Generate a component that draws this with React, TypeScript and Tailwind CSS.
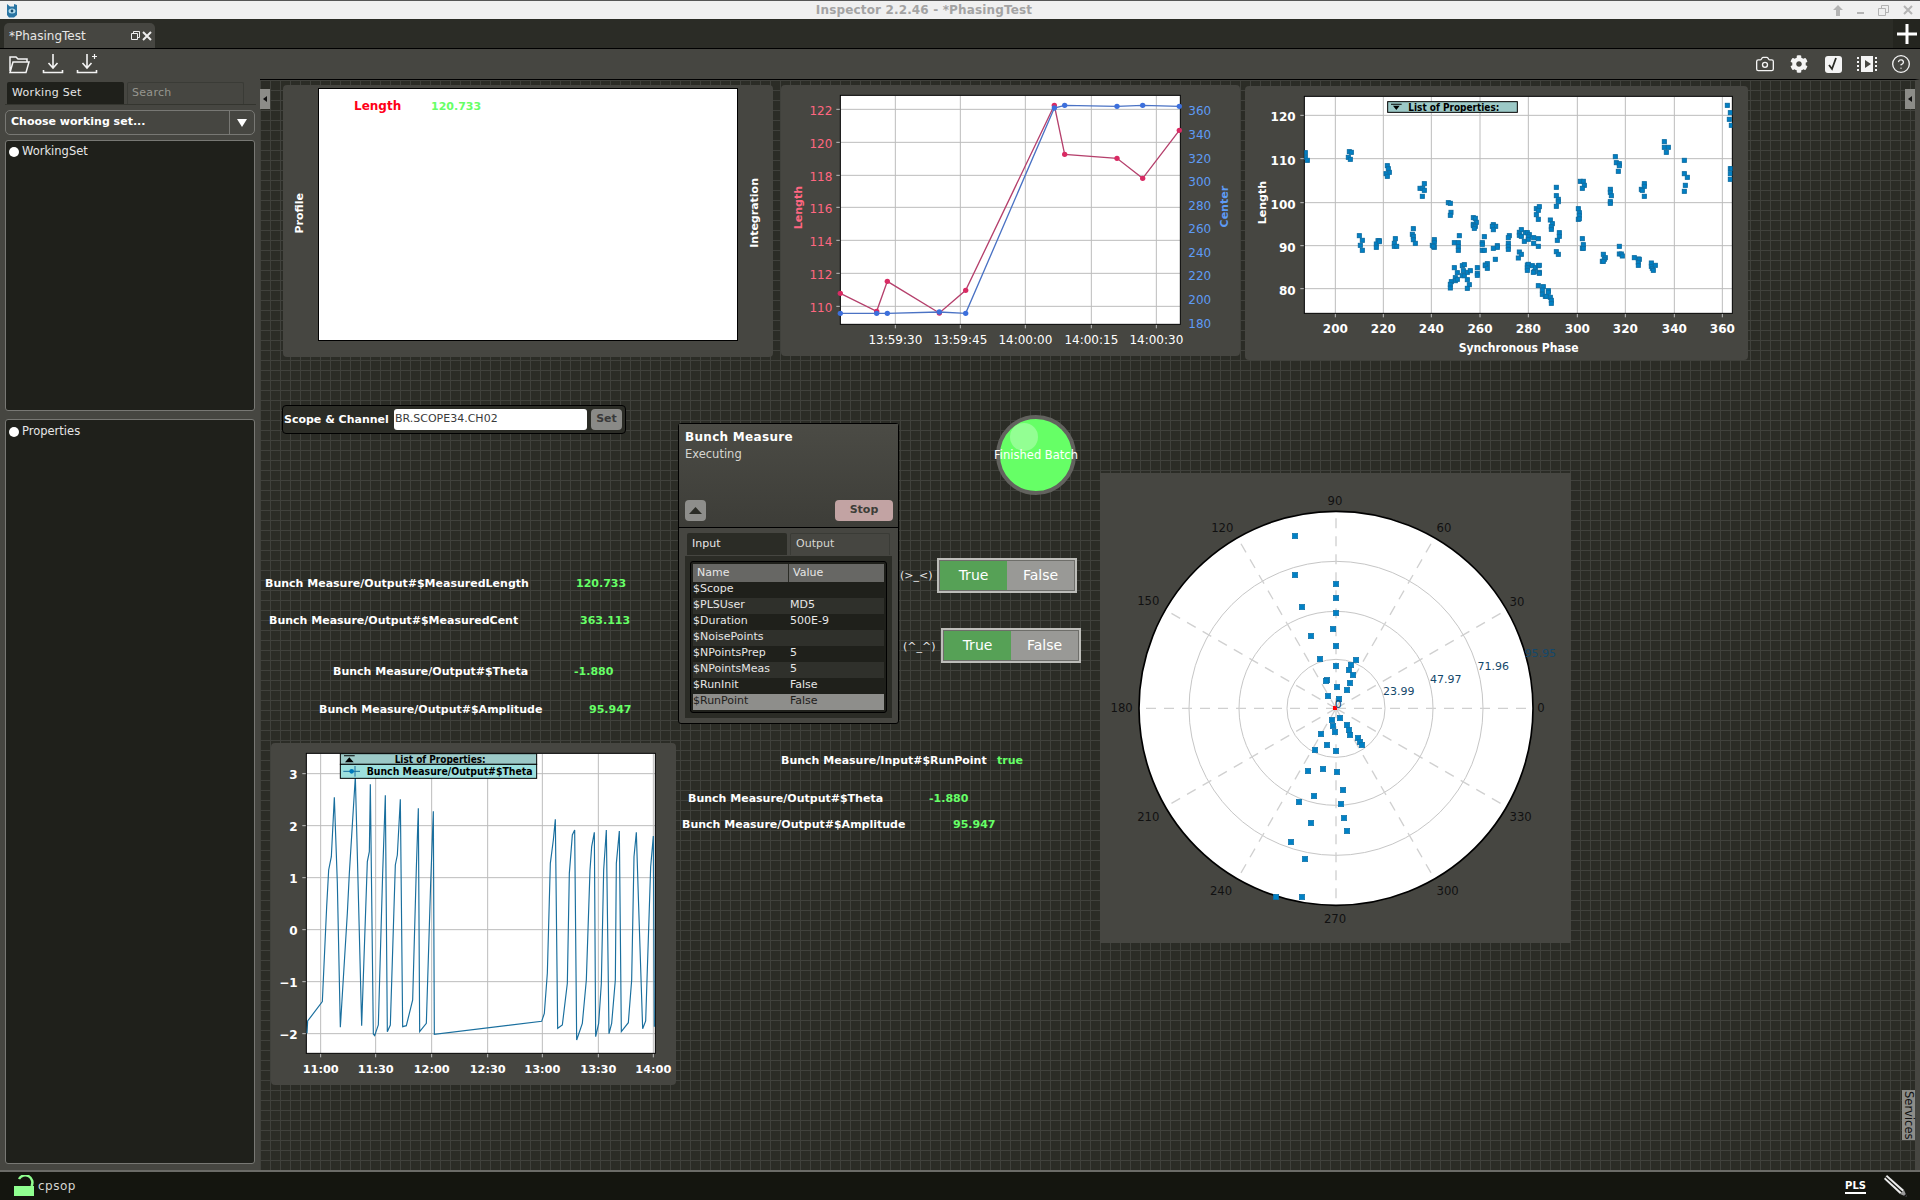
import { Camera, CircleHelp } from "lucide-react";
import { FaCog } from "react-icons/fa";

const lengthPts = [[211,640],[320,694],[352,604],[508,699],[587,631],[853,76],[884,223],[1041,235],[1118,295],[1228,151]];
const centerPts = [[211,700],[320,700],[352,700],[508,696],[587,700],[853,84],[884,76],[1041,79],[1118,76],[1228,79]];

const scatter = [
  [196,218],[196,232],[202,241],[328,215],[334,217],[325,232],[331,238],[442,257],[445,266],[448,277],[438,281],[442,289],
  [553,311],[540,325],[548,325],[553,331],[547,349],[625,368],[631,370],[633,397],[631,406],[358,467],[367,481],[361,496],[367,511],
  [414,482],[418,482],[409,492],[409,502],[418,485],[466,476],[463,490],[463,499],[470,499],[520,446],[517,463],[520,469],[520,479],[526,490],
  [583,479],[583,487],[577,496],[583,502],[580,499],[658,467],[643,488],[655,488],[655,499],[655,511],
  [700,413],[706,415],[709,427],[700,433],[700,437],[706,439],[703,445],[733,470],[727,488],[727,493],[727,511],[733,511],
  [760,434],[767,439],[757,439],[760,449],[772,497],[772,502],[760,505],[766,538],[808,467],[805,473],[805,490],[805,499],[805,508],
  [838,457],[844,449],[838,466],[844,469],[856,458],[862,458],[868,464],[865,470],[853,484],[865,478],[881,473],[895,476],[881,490],[895,499],
  [838,516],[844,523],[835,534],[889,386],[898,380],[889,404],[895,391],[895,418],[931,420],[937,431],[934,440],[934,448],
  [949,322],[949,347],[955,358],[955,365],[949,379],[958,458],[958,469],[952,481],[949,515],[955,523],
  [1015,386],[1018,398],[1018,406],[1015,418],[1018,416],[1021,304],[1030,304],[1033,316],[1027,325],[1027,476],[1030,494],[1027,505],[1030,505],
  [1111,328],[1111,337],[1114,347],[1111,365],[1111,370],[1126,230],[1129,248],[1138,251],[1138,257],[1135,274],[1138,499],[1138,522],[1144,522],[1147,528],
  [1090,523],[1096,533],[1093,538],[1087,544],[1090,544],[1183,533],[1195,537],[1198,538],[1195,547],[1195,556],[1234,549],[1234,559],[1237,565],[1240,571],[1246,556],
  [1213,311],[1213,319],[1204,328],[1207,331],[1213,349],[1273,185],[1273,202],[1285,202],[1279,217],[1333,241],[1333,281],[1342,292],[1336,316],[1333,334],
  [1462,76],[1471,98],[1468,118],[1474,136],[1471,266],[1474,266],[1471,281],[1471,298],
  [643,563],[652,578],[646,593],[646,602],[652,598],[634,605],[631,613],[631,624],[667,557],[673,554],[670,572],[667,587],[673,587],[682,577],[691,572],[682,599],[688,614],[682,625],
  [712,563],[712,580],[712,586],[736,555],[742,551],[736,557],[742,565],[862,555],[865,553],[862,563],[862,571],[877,557],[886,563],[895,557],[883,575],[880,577],[898,577],[898,580],[898,556],
  [895,617],[910,620],[907,630],[907,643],[916,649],[925,632],[925,637],[919,649],[931,652],[934,661],[934,670],
];

const theta = [[141,880],[143,843],[187,785],[200,500],[206,390],[214,350],[223,172],[232,430],[241,862],[262,520],[268,400],[286,110],[296,500],[305,857],[322,365],[328,335],[331,133],[340,882],[344,887],[355,855],[368,400],[376,166],[382,875],[391,855],[406,375],[412,345],[421,178],[428,860],[439,857],[458,780],[469,385],[475,205],[479,875],[499,850],[512,430],[520,214],[523,883],[845,844],[853,820],[862,700],[871,370],[880,300],[886,238],[893,865],[907,855],[922,730],[928,400],[937,285],[944,270],[950,900],[967,850],[979,720],[990,390],[995,320],[1003,277],[1007,890],[1016,850],[1024,730],[1031,390],[1039,270],[1047,881],[1055,850],[1066,720],[1069,370],[1078,273],[1084,875],[1105,848],[1115,720],[1122,350],[1129,277],[1136,500],[1148,866],[1157,843],[1172,380],[1180,288],[1183,860]];

const polar = [
  [585,183],[585,300],[708,327],[708,369],[606,396],[708,414],[699,462],[633,483],[708,513],[660,552],[768,555],[753,570],[708,573],[747,585],[759,600],[681,615],[678,618],[750,624],[711,636],[741,645],[684,663],[717,672],
  [720,729],[696,735],[699,753],[741,750],[747,765],[705,771],[663,777],[750,780],[774,789],[780,801],[786,810],[681,810],[645,825],[708,828],[624,888],[669,882],[711,891],[729,945],[642,963],[597,981],[723,987],[732,1029],[633,1044],[741,1068],[573,1101],[615,1152],[528,1266],[606,1266],
];

const tableRows = [
  ["$Scope", ""],
  ["$PLSUser", "MD5"],
  ["$Duration", "500E-9"],
  ["$NoisePoints", ""],
  ["$NPointsPrep", "5"],
  ["$NPointsMeas", "5"],
  ["$RunInit", "False"],
  ["$RunPoint", "False"],
];

const toPoints = (pts: number[][]) => pts.map((p) => p.join(",")).join(" ");

function Panel({ className, children }: { className: string; children: React.ReactNode }) {
  return <div className={`absolute rounded-[4px] bg-[#464641] ${className}`}>{children}</div>;
}

function DownloadIcon({ plus }: { plus?: boolean }) {
  return (
    <svg width="22" height="22" viewBox="0 0 22 22" fill="none" stroke="#f4f4f4" strokeWidth="1.6">
      <path d="M11 1v13M6.5 10l4.5 5 4.5-5M1.5 17v2.5h19V17" />
      {plus && <path d="M16 3.5h5M18.5 1v5" strokeWidth="1.2" />}
    </svg>
  );
}

function Toggle({ className }: { className: string }) {
  return (
    <div className={`absolute flex h-[35px] w-[140px] border-2 border-[#bdbdb9] bg-[#6e6e6a] p-px text-[14px] ${className}`}>
      <div className="flex flex-1 items-center justify-center bg-[#56a156] text-white">True</div>
      <div className="flex flex-1 items-center justify-center bg-[#999996] text-white">False</div>
    </div>
  );
}

function Label({ className, green, children }: { className: string; green?: boolean; children: React.ReactNode }) {
  return (
    <div className={`absolute h-4 whitespace-nowrap text-[11px] font-bold leading-4 ${green ? "text-[#66ff66]" : "text-white"} ${className}`}>
      {children}
    </div>
  );
}

export default function App() {
  return (
    <div className="flex h-screen w-[1920px] flex-col overflow-hidden bg-[#464641] font-['DejaVu_Sans',sans-serif] text-[11px] text-white">
      {/* window title */}
      <div className="relative flex h-[19px] shrink-0 items-center justify-center border-t border-[#555] bg-[#f0f0f0] pr-[72px] text-[12px] font-bold tracking-[0.15px] text-[#a3a3a3]">
        <svg className="absolute left-[6px] top-[2px]" width="12" height="15" viewBox="0 0 12 15">
          <path d="M1 1l3 2.5h4V1l3 1v10l-3 2.5H3L1 12z" fill="#2a75a3" />
          <ellipse cx="6" cy="8" rx="3.5" ry="2.5" fill="#b5dcec" />
          <circle cx="6" cy="8" r="1.4" fill="#164b6e" />
        </svg>
        Inspector 2.2.46 - *PhasingTest
        <div className="absolute right-[7px] top-0 flex h-[18px] items-center gap-[14px] text-[#b4b4b4]">
          <svg width="10" height="11" viewBox="0 0 10 11" fill="#b4b4b4"><path d="M5 0l5 5H7v6H3V5H0z" /></svg>
          <div className="mt-[6px] h-[2px] w-[7px] bg-[#b4b4b4]" />
          <svg width="11" height="11" viewBox="0 0 11 11" fill="none" stroke="#b4b4b4"><path d="M.5 3.5h7v7h-7zM3.5 3V.5h7v7H8" /></svg>
          <svg width="10" height="10" viewBox="0 0 10 10" stroke="#b4b4b4" strokeWidth="2"><path d="M1 1l8 8M9 1l-8 8" /></svg>
        </div>
      </div>

      {/* tab bar */}
      <div className="flex h-[30px] shrink-0 items-end justify-between border-b border-black bg-[#2b2c26]">
        <div className="ml-[4px] flex h-[25px] w-[151px] items-center justify-between rounded-t-[5px] bg-[#464641] pl-[5px] pr-[3px] text-[12px] text-[#e6e6e6]">
          <span>*PhasingTest</span>
          <span className="flex items-center gap-[2px]">
            <svg width="9" height="9" viewBox="0 0 9 9" fill="none" stroke="#eee"><path d="M.5 2.5h6v6h-6zM2.5 2V.5h6v6H7" /></svg>
            <svg width="10" height="10" viewBox="0 0 10 10" stroke="#eee" strokeWidth="2"><path d="M1 1l8 8M9 1l-8 8" /></svg>
          </span>
        </div>
        <div className="flex h-[29px] w-[27px] items-center justify-center bg-[#24251f]">
          <svg width="20" height="20" viewBox="0 0 20 20" fill="#fff"><path d="M8.5 0h3v8.5H20v3h-8.5V20h-3v-8.5H0v-3h8.5z" /></svg>
        </div>
      </div>

      {/* toolbar */}
      <div className="flex h-[30px] shrink-0 items-center justify-between pl-[8px] pr-[8px]">
        <div className="flex items-center gap-[12px]">
          <svg width="22" height="20" viewBox="0 0 22 20" fill="none" stroke="#f4f4f4" strokeWidth="1.5">
            <path d="M2 17V3h6l2 2h9v3M2 18.5h16L21 8H5z" />
          </svg>
          <DownloadIcon />
          <DownloadIcon plus />
        </div>
        <div className="flex items-center gap-[12px]">
          <div className="flex w-[22px] justify-center"><Camera size={20} strokeWidth={1.6} color="#f4f4f4" /></div>
          <div className="flex w-[22px] justify-center"><FaCog size={18} color="#f4f4f4" /></div>
          <div className="flex w-[22px] justify-center">
            <div className="flex h-[17px] w-[17px] items-center justify-center rounded-[3px] bg-[#f4f4f4]">
              <svg width="12" height="14" viewBox="0 0 12 14" fill="none" stroke="#2b2c26" strokeWidth="1.8"><path d="M2 8l3 4 4-11" /></svg>
            </div>
          </div>
          <svg width="22" height="18" viewBox="0 0 22 18" fill="#f4f4f4">
            <path d="M5 1h12v16H5z" />
            <path d="M9 5l6 4-6 4z" fill="#464641" />
            <path d="M1 2h2v2H1zM1 6h2v2H1zM1 10h2v2H1zM1 14h2v2H1zM19 2h2v2h-2zM19 6h2v2h-2zM19 10h2v2h-2zM19 14h2v2h-2z" />
          </svg>
          <div className="flex w-[22px] justify-center"><CircleHelp size={20} strokeWidth={1.6} color="#f4f4f4" /></div>
        </div>
      </div>

      <div className="flex min-h-0 flex-1">
        {/* sidebar */}
        <div className="flex w-[260px] shrink-0 flex-col px-[5px] pb-[6px] pt-[3px]">
          <div className="ml-[2px] flex h-[22px] gap-[3px]">
            <div className="flex w-[117px] items-center rounded-t-[2px] bg-[#1f201b] px-[5px] tracking-[0.3px] text-[#e6e6e6]">Working Set</div>
            <div className="flex w-[117px] items-center rounded-t-[2px] border border-b-0 border-[#3a3b36] px-[4px] tracking-[0.3px] text-[#96968f]">Search</div>
          </div>
          <div className="h-px w-[251px] bg-[#34352f]" />
          <div className="mt-[5px] flex h-[25px] items-center justify-between rounded-[5px] border border-[#787874]">
            <span className="pl-[5px] font-bold">Choose working set...</span>
            <span className="flex h-full w-[25px] items-center justify-center border-l border-[#787874]">
              <svg width="10" height="8" viewBox="0 0 10 8" fill="#fff"><path d="M0 0h10L5 8z" /></svg>
            </span>
          </div>
          <div className="mt-[5px] h-[271px] rounded-[3px] border border-[#787874] bg-[#1f201b] px-[3px] pt-[2px]">
            <div className="flex items-center gap-[3px] text-[11.5px] text-[#e6e6e6]">
              <span className="h-[10px] w-[10px] rounded-full bg-white" />
              WorkingSet
            </div>
          </div>
          <div className="mt-[8px] min-h-0 flex-1 rounded-[3px] border border-[#787874] bg-[#1f201b] px-[3px] pt-[3px]">
            <div className="flex items-center gap-[3px] text-[11.5px] text-[#e6e6e6]">
              <span className="h-[10px] w-[10px] rounded-full bg-white" />
              Properties
            </div>
          </div>
        </div>

        {/* canvas */}
        <div className="relative flex-1 border-r-[5px] border-t border-r-[#464641] border-t-black bg-[#2b2c26] bg-[linear-gradient(#40413c_1px,transparent_1px),linear-gradient(90deg,#40413c_1px,transparent_1px)] bg-[size:10px_10px]">
          <div className="absolute left-0 top-[9px] flex h-[20px] w-[10px] items-center justify-center bg-[#8c8c88]">
            <svg width="4" height="6" viewBox="0 0 4 6" fill="#111"><path d="M4 0v6L0 3z" /></svg>
          </div>
          <div className="absolute right-0 top-[9px] flex h-[20px] w-[10px] items-center justify-center bg-[#8c8c88]">
            <svg width="4" height="6" viewBox="0 0 4 6" fill="#111"><path d="M4 0v6L0 3z" /></svg>
          </div>

          {/* profile plot */}
          <Panel className="left-[23px] top-[5px] flex h-[272px] w-[490px] items-start">
            <div className="flex h-[256px] w-[35px] items-center justify-center">
              <span className="rotate-180 font-bold [writing-mode:vertical-rl]">Profile</span>
            </div>
            <div className="mt-[3px] flex h-[253px] w-[420px] items-baseline border border-black bg-white pl-[35px] pt-[8px] font-bold">
              <span className="w-[77px] text-[12px] text-[#ff0018]">Length</span>
              <span className="text-[#66ff66]">120.733</span>
            </div>
            <div className="flex h-[256px] w-[35px] items-center justify-center">
              <span className="rotate-180 font-bold [writing-mode:vertical-rl]">Integration</span>
            </div>
          </Panel>

          {/* integration plot */}
          <Panel className="left-[521px] top-[5px] h-[271px] w-[459px]">
            <svg width="459" height="271" viewBox="33 15 1377 813" fontFamily="DejaVu Sans">
              <rect x="211" y="46" width="1020" height="687" fill="#fff" />
              {[376, 571, 766, 964, 1159].map((x) => (
                <line key={x} x1={x} x2={x} y1="46" y2="745" stroke="#bcbcbc" strokeWidth="3" />
              ))}
              {[88, 187, 286, 382, 481, 580, 679].map((y) => (
                <line key={y} x1="199" x2="1231" y1={y} y2={y} stroke="#bcbcbc" strokeWidth="3" />
              ))}
              <rect x="211" y="46" width="1020" height="687" fill="none" stroke="#000" strokeWidth="3" />
              <polyline points={toPoints(lengthPts)} fill="none" stroke="#b5406c" strokeWidth="4" />
              <polyline points={toPoints(centerPts)} fill="none" stroke="#4a72c4" strokeWidth="4" />
              {lengthPts.map(([x, y]) => <circle key={x} cx={x} cy={y} r="8" fill="#d92a63" />)}
              {centerPts.map(([x, y]) => <circle key={x} cx={x} cy={y} r="8" fill="#3c6fdc" />)}
              {[["122", 106], ["120", 205], ["118", 304], ["116", 400], ["114", 499], ["112", 598], ["110", 697]].map(([t, y]) => (
                <text key={t} x="187" y={y} textAnchor="end" fontSize="36" fill="#ff6680">{t}</text>
              ))}
              {[["360", 106], ["340", 178], ["320", 250], ["300", 319], ["280", 391], ["260", 460], ["240", 532], ["220", 601], ["200", 673], ["180", 745]].map(([t, y]) => (
                <text key={t} x="1255" y={y} fontSize="36" fill="#5e9bf5">{t}</text>
              ))}
              {[["13:59:30", 376], ["13:59:45", 571], ["14:00:00", 766], ["14:00:15", 964], ["14:00:30", 1159]].map(([t, x]) => (
                <text key={t} x={x} y="791" textAnchor="middle" fontSize="36" fill="#fff">{t}</text>
              ))}
              <text transform="translate(96 383) rotate(-90)" textAnchor="middle" fontSize="33" fontWeight="bold" fill="#ff6680">Length</text>
              <text transform="translate(1373 380) rotate(-90)" textAnchor="middle" fontSize="33" fontWeight="bold" fill="#5e9bf5">Center</text>
            </svg>
          </Panel>

          {/* synchronous phase scatter */}
          <Panel className="left-[985px] top-[6px] h-[274px] w-[503px]">
            <svg width="503" height="274" viewBox="15 18 1509 822" fontFamily="DejaVu Sans">
              <rect x="193" y="49" width="1284" height="651" fill="#fff" />
              {[286, 430, 574, 720, 865, 1012, 1156, 1303, 1447].map((x) => (
                <line key={x} x1={x} x2={x} y1="49" y2="712" stroke="#bcbcbc" strokeWidth="3" />
              ))}
              {[106, 236, 368, 497, 626].map((y) => (
                <line key={y} x1="181" x2="1477" y1={y} y2={y} stroke="#bcbcbc" strokeWidth="3" />
              ))}
              <rect x="193" y="49" width="1284" height="651" fill="none" stroke="#000" strokeWidth="3" />
              <svg x="193" y="49" width="1284" height="651" viewBox="193 49 1284 651">
                {scatter.map(([x, y], i) => (
                  <rect key={i} x={x - 6} y={y - 6} width="12" height="12" fill="#0081c6" stroke="#0f6fa5" strokeWidth="3" />
                ))}
              </svg>
              <rect x="443" y="65" width="389" height="32" fill="#9cc9c7" stroke="#000" strokeWidth="3" />
              <path d="M453 71h32v3h-32zM459 77h20l-10 13z" fill="#000" />
              <text x="505" y="93" fontSize="30" fontWeight="bold" textLength="273" lengthAdjust="spacingAndGlyphs" fill="#000">List of Properties:</text>
              {[120, 110, 100, 90, 80].map((t, i) => (
                <text key={t} x="167" y={[124, 254, 386, 515, 644][i]} textAnchor="end" fontSize="36" fontWeight="bold" fill="#fff">{t}</text>
              ))}
              {[200, 220, 240, 260, 280, 300, 320, 340, 360].map((t, i) => (
                <text key={t} x={[286, 430, 574, 720, 865, 1012, 1156, 1303, 1447][i]} y="759" textAnchor="middle" fontSize="36" fontWeight="bold" fill="#fff">{t}</text>
              ))}
              <text x="836" y="816" textAnchor="middle" fontSize="36" fontWeight="bold" textLength="360" lengthAdjust="spacingAndGlyphs" fill="#fff">Synchronous Phase</text>
              <text transform="translate(77 368) rotate(-90)" textAnchor="middle" fontSize="33" fontWeight="bold" fill="#fff">Length</text>
            </svg>
          </Panel>

          {/* scope input */}
          <div className="absolute left-[22px] top-[325px] flex h-[29px] w-[344px] items-center rounded-[4px] border border-black bg-[#2b2c26] pl-[1px] pr-[3px]">
            <span className="mt-px w-[110px] whitespace-nowrap font-bold">Scope &amp; Channel</span>
            <div className="flex h-[21px] w-[193px] items-center rounded-[3px] bg-white pl-px text-[#3a3a3a]">BR.SCOPE34.CH02</div>
            <div className="ml-[4px] flex h-[21px] w-[31px] items-center justify-center rounded-[4px] bg-[#8a8a87] font-bold text-[#3a3a3a]">Set</div>
          </div>

          <Label className="left-[5px] top-[496px]">Bunch Measure/Output#$MeasuredLength</Label>
          <Label green className="left-[316px] top-[496px]">120.733</Label>
          <Label className="left-[9px] top-[533px]">Bunch Measure/Output#$MeasuredCent</Label>
          <Label green className="left-[320px] top-[533px]">363.113</Label>
          <Label className="left-[73px] top-[584px]">Bunch Measure/Output#$Theta</Label>
          <Label green className="left-[314px] top-[584px]">-1.880</Label>
          <Label className="left-[59px] top-[622px]">Bunch Measure/Output#$Amplitude</Label>
          <Label green className="left-[329px] top-[622px]">95.947</Label>
          <Label className="left-[521px] top-[673px]">Bunch Measure/Input#$RunPoint</Label>
          <Label green className="left-[737px] top-[673px]">true</Label>
          <Label className="left-[428px] top-[711px]">Bunch Measure/Output#$Theta</Label>
          <Label green className="left-[669px] top-[711px]">-1.880</Label>
          <Label className="left-[422px] top-[737px]">Bunch Measure/Output#$Amplitude</Label>
          <Label green className="left-[693px] top-[737px]">95.947</Label>

          {/* theta plot */}
          <Panel className="left-[11px] top-[663px] h-[342px] w-[405px]">
            <svg width="405" height="342" viewBox="33 9 1215 1026" fontFamily="DejaVu Sans">
              <rect x="139" y="40" width="1047" height="900" fill="#fff" />
              {[182, 347, 515, 683, 847, 1015, 1180].map((x) => (
                <line key={x} x1={x} x2={x} y1="40" y2="952" stroke="#bcbcbc" strokeWidth="3" />
              ))}
              {[101, 257, 413, 569, 725, 881].map((y) => (
                <line key={y} x1="127" x2="1186" y1={y} y2={y} stroke="#bcbcbc" strokeWidth="3" />
              ))}
              <rect x="139" y="40" width="1047" height="900" fill="none" stroke="#000" strokeWidth="3" />
              <polyline points={toPoints(theta)} fill="none" stroke="#1a6f9e" strokeWidth="3.5" />
              <rect x="241" y="41" width="589" height="32" fill="#9cc9c7" stroke="#000" strokeWidth="3" />
              <rect x="241" y="73" width="589" height="42" fill="#9de0de" stroke="#000" strokeWidth="3" />
              <path d="M252 46h32v3h-32zM268 52l13 15h-26z" fill="#000" />
              <text x="404" y="69" fontSize="30" fontWeight="bold" textLength="273" lengthAdjust="spacingAndGlyphs" fill="#000">List of Properties:</text>
              <path d="M250 94h50M285 78v32" stroke="#1a6f9e" strokeWidth="3" />
              <circle cx="275" cy="94" r="7" fill="#0079bb" />
              <text x="320" y="105" fontSize="30" fontWeight="bold" textLength="498" lengthAdjust="spacingAndGlyphs" fill="#000">Bunch Measure/Output#$Theta</text>
              {[["3", 118], ["2", 274], ["1", 430], ["0", 586], ["−1", 742], ["−2", 898]].map(([t, y]) => (
                <text key={t} x="113" y={y} textAnchor="end" fontSize="36" fontWeight="bold" fill="#fff">{t}</text>
              ))}
              {[["11:00", 182], ["11:30", 347], ["12:00", 515], ["12:30", 683], ["13:00", 847], ["13:30", 1015], ["14:00", 1180]].map(([t, x]) => (
                <text key={t} x={x} y="999" textAnchor="middle" fontSize="34" fontWeight="bold" fill="#fff">{t}</text>
              ))}
            </svg>
          </Panel>

          {/* bunch measure node */}
          <div className="absolute left-[418px] top-[343px] flex h-[301px] w-[221px] flex-col rounded-[3px] border border-black bg-[#464641]">
            <div className="flex h-[104px] shrink-0 flex-col border-b border-black bg-[linear-gradient(#4b4b45,#3d3d38)] pb-[6px] pl-[6px] pr-[5px] pt-[4px]">
              <div className="text-[12px] font-bold tracking-[0.3px]">Bunch Measure</div>
              <div className="text-[11.5px] text-[#d6d6d2]">Executing</div>
              <div className="mt-auto flex items-center justify-between">
                <div className="flex h-[21px] w-[21px] items-center justify-center rounded-[4px] bg-[#8e8e8b]">
                  <svg width="13" height="7" viewBox="0 0 13 7" fill="#2b2c26"><path d="M6.5 0L13 7H0z" /></svg>
                </div>
                <div className="flex h-[21px] w-[58px] items-center justify-center rounded-[4px] bg-[#c2a3a3] font-bold text-[#3d3d38]">Stop</div>
              </div>
            </div>
            <div className="flex flex-1 flex-col px-[6px] pb-[6px] pt-[5px]">
              <div className="flex h-[23px] shrink-0 gap-[3px] pb-px pl-[2px] pr-[2px]">
                <div className="flex w-[100px] items-center rounded-t-[2px] bg-[#2b2c26] pl-[5px] text-[#e6e6e6]">Input</div>
                <div className="flex w-[100px] items-center rounded-t-[2px] border border-b-0 border-[#3a3b36] pl-[5px] text-[#d6d6d2]">Output</div>
              </div>
              <div className="flex-1 bg-[#2b2c26] p-[5px]">
                <div className="h-full rounded-[3px] border border-black bg-[#1f201b] p-[2px]">
                  <div className="flex h-[18px] bg-[#676764] text-[#e6e6e6]">
                    <span className="flex w-[96px] items-center border-r border-[#2b2c26] pl-[4px]">Name</span>
                    <span className="flex flex-1 items-center pl-[4px]">Value</span>
                  </div>
                  {tableRows.map(([name, value], i) => (
                    <div
                      key={name}
                      className={`flex h-[16px] items-center pb-px ${i === 7 ? "bg-[#8e8e8b] text-[#1f201b]" : i % 2 === 1 ? "bg-[#2f302b] text-[#e6e6e6]" : "text-[#e6e6e6]"}`}
                    >
                      <span className="w-[96px] truncate">{name}</span>
                      <span className="flex-1 pl-px">{value}</span>
                    </div>
                  ))}
                </div>
              </div>
            </div>
          </div>

          <div className="absolute left-[640px] top-[488px] text-[#e6e6e6]">(&gt;_&lt;)</div>
          <Toggle className="left-[677px] top-[478px]" />
          <div className="absolute left-[643px] top-[559px] text-[#e6e6e6]">(^_^)</div>
          <Toggle className="left-[681px] top-[548px]" />

          {/* finished batch indicator */}
          <div className="absolute left-[736px] top-[335px] flex h-[80px] w-[80px] items-center justify-center rounded-full border-[4px] border-[#62625e] bg-[#66ff66]">
            <div className="absolute left-[10px] top-[4px] h-[28px] w-[28px] rounded-full bg-[#93ff93]" />
            <span className="relative mt-[2px] whitespace-nowrap text-[11.5px] text-white">Finished Batch</span>
          </div>

          {/* polar plot */}
          <Panel className="left-[840px] top-[393px] h-[470px] w-[471px] rounded-none">
            <svg width="471" height="470" viewBox="0 -6 1413 1410" fontFamily="DejaVu Sans">
              <circle cx="708" cy="700" r="591" fill="#fff" stroke="#000" strokeWidth="5" />
              {[147, 291, 441].map((r) => (
                <circle key={r} cx="708" cy="700" r={r} fill="none" stroke="#c6c6c6" strokeWidth="3" />
              ))}
              {[0, 30, 60, 90, 120, 150, 180, 210, 240, 270, 300, 330].map((a) => (
                <line
                  key={a}
                  x1="708"
                  y1="700"
                  x2={708 + 589 * Math.cos((a * Math.PI) / 180)}
                  y2={700 - 589 * Math.sin((a * Math.PI) / 180)}
                  stroke="#d0d0d0"
                  strokeWidth="4"
                  strokeDasharray="30 24"
                />
              ))}
              {polar.map(([x, y], i) => (
                <rect key={i} x={x - 8} y={y - 8} width="16" height="16" fill="#0081c6" stroke="#0f6fa5" strokeWidth="2" />
              ))}
              <rect x="699" y="693" width="12" height="12" fill="#ff0000" />
              {[["90", 705, 90], ["120", 367, 170], ["60", 1032, 170], ["150", 145, 390], ["30", 1251, 392], ["180", 65, 710], ["0", 1323, 710], ["210", 145, 1037], ["330", 1262, 1037], ["240", 363, 1259], ["300", 1043, 1259], ["270", 705, 1343]].map(([t, x, y]) => (
                <text key={t} x={x} y={y} textAnchor="middle" fontSize="35" fill="#111">{t}</text>
              ))}
              {[["23.99", 896, 661], ["47.97", 1037, 624], ["71.96", 1180, 585], ["95.95", 1321, 546]].map(([t, x, y]) => (
                <text key={t} x={x} y={y} textAnchor="middle" fontSize="33" fill="#14486b">{t}</text>
              ))}
              <text x="715" y="700" textAnchor="middle" fontSize="33" fill="#14486b">0</text>
            </svg>
          </Panel>

          <div className="absolute bottom-[30px] right-0 flex h-[50px] w-[13px] items-center justify-center bg-[#8c8c88] text-[11.5px] text-[#111]">
            <span className="[writing-mode:vertical-rl]">Services</span>
          </div>
        </div>
      </div>

      {/* status bar */}
      <div className="flex h-[30px] shrink-0 items-center justify-between border-t-2 border-[#6b6b67] bg-[#14150f] pl-[14px] pr-[12px]">
        <div className="flex items-center gap-[4px] text-[12px] text-[#d6d6d2]">
          <svg width="20" height="22" viewBox="0 0 20 22">
            <path d="M5 4a7 7 0 0 1 12.5 7" fill="none" stroke="#90ff90" strokeWidth="2.5" />
            <rect x="0" y="11" width="20" height="10" fill="#90ff90" />
          </svg>
          <span className="tracking-[0.5px]">cpsop</span>
        </div>
        <div className="flex items-center gap-[18px]">
          <span className="border-b-2 border-white text-[10px] font-bold leading-[13px]">PLS</span>
          <svg width="24" height="22" viewBox="0 0 24 22">
            <path d="M0 4l3-4 17 15-4 4z" fill="#ececec" />
            <path d="M1.5 2L18 17" stroke="#14150f" strokeWidth="1.2" />
            <path d="M16 19l4-4 3 7z" fill="#9a9a9a" />
            <path d="M21.5 19l1.5 3-3-1z" fill="#111" />
          </svg>
        </div>
      </div>
    </div>
  );
}
